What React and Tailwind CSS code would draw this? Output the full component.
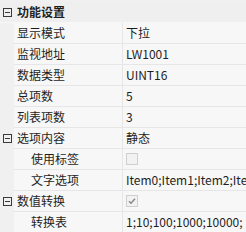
import React from "react";

const rows = [
  { name: "显示模式", value: "下拉" },
  { name: "监视地址", value: "LW1001" },
  { name: "数据类型", value: "UINT16" },
  { name: "总项数", value: "5" },
  { name: "列表项数", value: "3" },
  { name: "选项内容", value: "静态", group: true },
  { name: "使用标签", sub: true, check: false },
  { name: "文字选项", sub: true, value: "Item0;Item1;Item2;Item3;Item4" },
  { name: "数值转换", group: true, check: true },
  { name: "转换表", sub: true, value: "1;10;100;1000;10000;" },
];

function Minus() {
  return (
    <div className="w-[9px] h-[9px] border border-[#3a3a3a] flex items-center justify-center bg-transparent">
      <div className="w-[5px] h-px bg-[#3a3a3a]" />
    </div>
  );
}

function Check({ checked }) {
  return (
    <div className="w-[12px] h-[12px] border border-[#cfcfcf] bg-[#f2f2f2] flex items-center justify-center">
      {checked && (
        <svg width="10" height="10" viewBox="0 0 10 10">
          <path d="M2 5.2 L4 7.2 L8 2.8" fill="none" stroke="#8a8a8a" strokeWidth="1.5" />
        </svg>
      )}
    </div>
  );
}

export default function App() {
  return (
    <div
      className="w-[246px] h-[232px] overflow-hidden bg-[#f0f0f0] pt-[2px] text-[12px] text-[#1e1e1e]"
      style={{ fontFamily: '"Noto Sans CJK SC", "Microsoft YaHei", sans-serif' }}
    >
      <div className="flex h-[21px] bg-[#efefef] border-b border-[#f7f7f7]">
        <div className="w-[14px] flex items-center justify-center pl-[1px]">
          <Minus />
        </div>
        <div className="flex items-center pl-[3px] font-bold leading-none">功能设置</div>
      </div>
      {rows.map((r, i) => (
        <div key={i} className="flex h-[21px]">
          <div className="w-[14px] shrink-0 flex items-center justify-center pl-[1px]">
            {r.group && <Minus />}
          </div>
          <div className="flex flex-1 bg-[#f7f7f7] border-b border-[#e6e6e6] min-w-0">
            <div
              className={
                "w-[109px] shrink-0 flex items-center leading-none border-r border-[#e6e6e6] " +
                (r.sub ? "pl-[17px]" : "pl-[3px]")
              }
            >
              {r.name}
            </div>
            <div className="flex-1 flex items-center pl-[3px] leading-none whitespace-nowrap overflow-hidden">
              {r.check !== undefined ? <Check checked={r.check} /> : r.value}
            </div>
          </div>
        </div>
      ))}
    </div>
  );
}
